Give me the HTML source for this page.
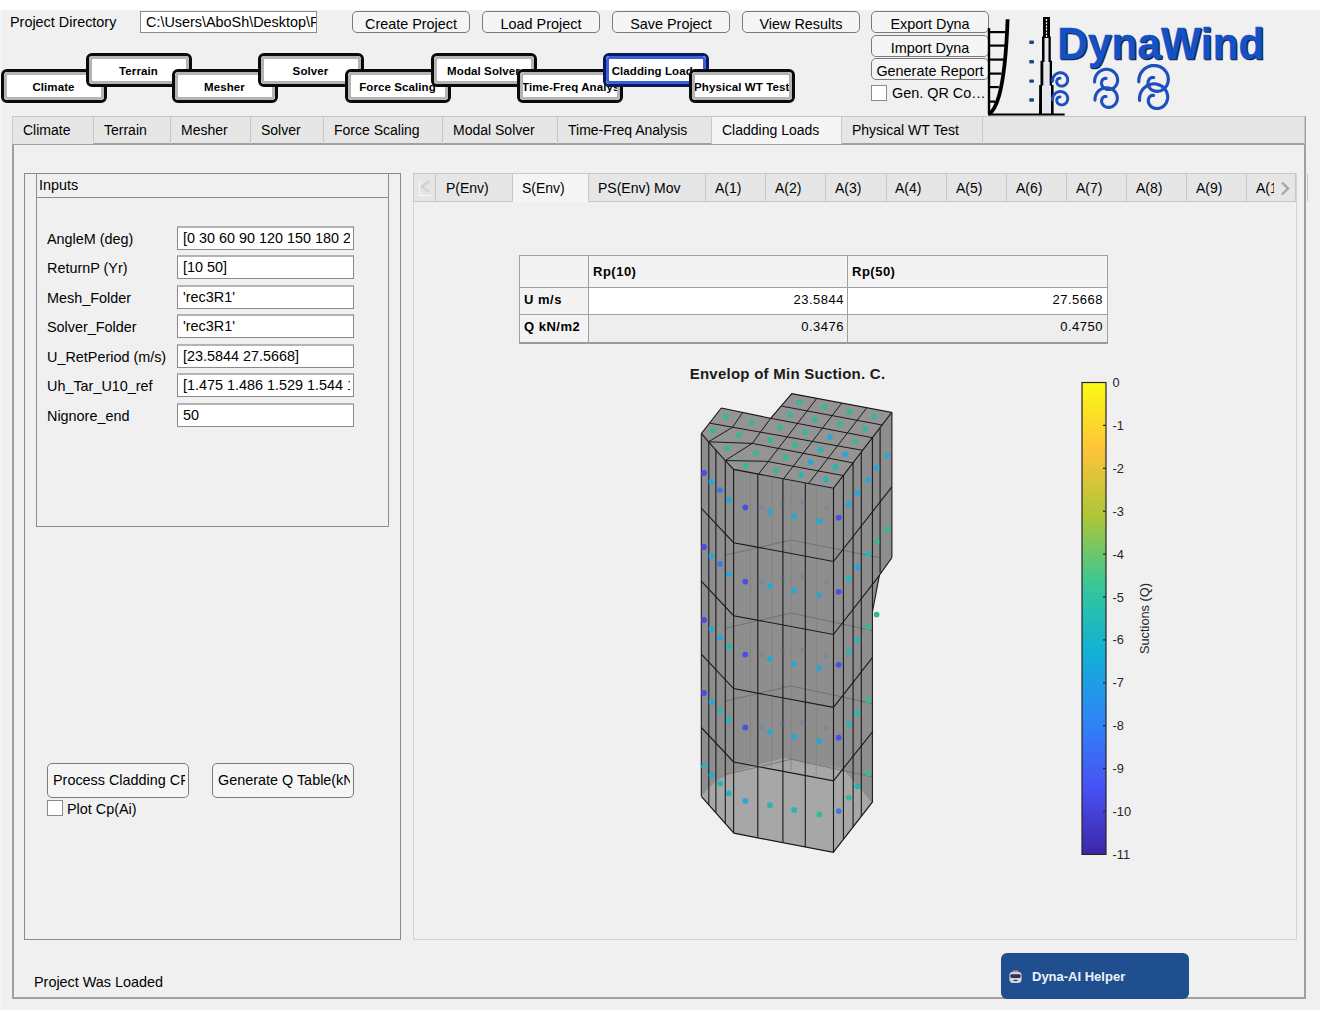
<!DOCTYPE html>
<html><head><meta charset="utf-8">
<style>
*{box-sizing:border-box;margin:0;padding:0}
html,body{width:1320px;height:1020px;background:#fff;overflow:hidden;font-family:"Liberation Sans",sans-serif;color:#000}
.a{position:absolute}
#app{position:absolute;left:0;top:10px;width:1320px;height:1000px;background:#f0f0f0;border-left:1px solid #f6f6f6}
.lbl{position:absolute;font-size:14.4px;line-height:16px;white-space:nowrap}
.btn{position:absolute;border:1px solid #7a7a7a;border-radius:5px;background:#f5f5f5;font-size:14.4px;text-align:center;white-space:nowrap;overflow:hidden;line-height:24px}
.edit{position:absolute;border:1px solid #8a8a8a;background:#fff;font-size:14.4px;white-space:nowrap;overflow:hidden;padding-left:5px;line-height:20px}
.chk{position:absolute;border:1px solid #8a8a8a;background:#fff;width:16px;height:16px}
/* custom overlapping tabs */
.ct{position:absolute;width:106px;height:34px;border:3px solid #0a0a0a;border-radius:6px;background:#fff;font-weight:bold;font-size:11.5px;text-align:center;overflow:hidden;white-space:nowrap}
.ct i{position:absolute;left:0;top:0;right:0;bottom:0;border:3px solid #b4b4b4;border-top-width:3.5px;border-radius:4px;font-style:normal;line-height:25px;letter-spacing:0.1px;overflow:hidden;text-indent:-1px}
.ct.sel{border-color:#0b1a5a}
.ct.sel i{border-color:#3a5fd9}
/* matlab tab row */
.tr{position:absolute;height:28px;border:1px solid #c2c2c2;border-bottom:none;background:#e6e6e6;font-size:14px;line-height:26px;white-space:nowrap;overflow:hidden}
</style></head><body>
<div id="app"></div>

<!-- top bar -->
<div class="lbl" style="left:10px;top:14px">Project Directory</div>
<div class="edit" style="left:140px;top:11px;width:177px;height:22px;line-height:21px">C:\Users\AboSh\Desktop\Proj</div>
<div class="btn" style="left:352px;top:11px;width:118px;height:22px">Create Project</div>
<div class="btn" style="left:482px;top:11px;width:118px;height:22px">Load Project</div>
<div class="btn" style="left:612px;top:11px;width:118px;height:22px">Save Project</div>
<div class="btn" style="left:742px;top:11px;width:118px;height:22px">View Results</div>
<div class="btn" style="left:871px;top:11px;width:118px;height:22px">Export Dyna</div>
<div class="btn" style="left:871px;top:35px;width:118px;height:22px">Import Dyna</div>
<div class="btn" style="left:871px;top:58px;width:118px;height:22px">Generate Report</div>
<div class="chk" style="left:871px;top:85px"></div>
<div class="lbl" style="left:892px;top:85px">Gen. QR Co…</div>

<!-- overlapping custom tabs -->
<div class="ct" style="left:1px;top:69px;z-index:1"><i>Climate</i></div>
<div class="ct" style="left:86px;top:53px;z-index:2"><i>Terrain</i></div>
<div class="ct" style="left:172px;top:69px;z-index:3"><i>Mesher</i></div>
<div class="ct" style="left:258px;top:53px;z-index:4"><i>Solver</i></div>
<div class="ct" style="left:345px;top:69px;z-index:5"><i>Force Scaling</i></div>
<div class="ct" style="left:431px;top:53px;z-index:6"><i>Modal Solver</i></div>
<div class="ct" style="left:517px;top:69px;z-index:7"><i>Time-Freq Analysis</i></div>
<div class="ct sel" style="left:603px;top:53px;z-index:8"><i>Cladding Loads</i></div>
<div class="ct" style="left:689px;top:69px;z-index:9"><i>Physical WT Test</i></div>

<!-- main tab group -->
<div class="a" style="left:12px;top:116px;width:1294px;height:883px;border:2px solid #a0a0a0;border-top:none;background:#f0f0f0"></div>
<div class="a" style="left:12px;top:116px;width:1293px;height:29px;background:#e6e6e6;border:1px solid #c8c8c8;border-bottom:2px solid #a0a0a0"></div>


<!-- main tab row labels -->
<div class="a" style="left:13px;top:117px;width:81px;height:27px;border-right:1px solid #c8c8c8;background:#e6e6e6"></div>
<div class="lbl" style="left:23px;top:122px;font-size:14px">Climate</div>
<div class="a" style="left:94px;top:117px;width:77px;height:27px;border-right:1px solid #c8c8c8"></div>
<div class="lbl" style="left:104px;top:122px;font-size:14px">Terrain</div>
<div class="a" style="left:171px;top:117px;width:80px;height:27px;border-right:1px solid #c8c8c8"></div>
<div class="lbl" style="left:181px;top:122px;font-size:14px">Mesher</div>
<div class="a" style="left:251px;top:117px;width:73px;height:27px;border-right:1px solid #c8c8c8"></div>
<div class="lbl" style="left:261px;top:122px;font-size:14px">Solver</div>
<div class="a" style="left:324px;top:117px;width:119px;height:27px;border-right:1px solid #c8c8c8"></div>
<div class="lbl" style="left:334px;top:122px;font-size:14px">Force Scaling</div>
<div class="a" style="left:443px;top:117px;width:115px;height:27px;border-right:1px solid #c8c8c8"></div>
<div class="lbl" style="left:453px;top:122px;font-size:14px">Modal Solver</div>
<div class="a" style="left:558px;top:117px;width:154px;height:27px;border-right:1px solid #c8c8c8"></div>
<div class="lbl" style="left:568px;top:122px;font-size:14px">Time-Freq Analysis</div>
<div class="a" style="left:711px;top:116px;width:131px;height:28px;background:#f5f5f5;border:1px solid #c8c8c8;border-bottom:none"></div>
<div class="lbl" style="left:722px;top:122px;font-size:14px">Cladding Loads</div>
<div class="a" style="left:842px;top:117px;width:141px;height:27px;border-right:1px solid #c8c8c8"></div>
<div class="lbl" style="left:852px;top:122px;font-size:14px">Physical WT Test</div>

<!-- left panel -->
<div class="a" style="left:24px;top:173px;width:377px;height:767px;border:1px solid #8c8c8c"></div>
<div class="a" style="left:36px;top:173px;width:353px;height:354px;border:1px solid #8c8c8c"></div>
<div class="a" style="left:36px;top:197px;width:353px;height:1px;background:#8c8c8c"></div>
<div class="lbl" style="left:39px;top:177px">Inputs</div>

<div class="lbl" style="left:47px;top:231px">AngleM (deg)</div>
<div class="edit" style="left:177px;top:226px;width:177px;height:24px;border-top:2px solid #b4b4b4;line-height:21px"><div style="overflow:hidden;width:167px">[0 30 60 90 120 150 180 210 240]</div></div>
<div class="lbl" style="left:47px;top:260px">ReturnP (Yr)</div>
<div class="edit" style="left:177px;top:255px;width:177px;height:24px;border-top:2px solid #b4b4b4;line-height:21px"><div style="overflow:hidden;width:167px">[10 50]</div></div>
<div class="lbl" style="left:47px;top:290px">Mesh_Folder</div>
<div class="edit" style="left:177px;top:285px;width:177px;height:24px;border-top:2px solid #b4b4b4;line-height:21px"><div style="overflow:hidden;width:167px">'rec3R1'</div></div>
<div class="lbl" style="left:47px;top:319px">Solver_Folder</div>
<div class="edit" style="left:177px;top:314px;width:177px;height:24px;border-top:2px solid #b4b4b4;line-height:21px"><div style="overflow:hidden;width:167px">'rec3R1'</div></div>
<div class="lbl" style="left:47px;top:349px">U_RetPeriod (m/s)</div>
<div class="edit" style="left:177px;top:344px;width:177px;height:24px;border-top:2px solid #b4b4b4;line-height:21px"><div style="overflow:hidden;width:167px">[23.5844 27.5668]</div></div>
<div class="lbl" style="left:47px;top:378px">Uh_Tar_U10_ref</div>
<div class="edit" style="left:177px;top:373px;width:177px;height:24px;border-top:2px solid #b4b4b4;line-height:21px"><div style="overflow:hidden;width:167px">[1.475 1.486 1.529 1.544 1.6]</div></div>
<div class="lbl" style="left:47px;top:408px">Nignore_end</div>
<div class="edit" style="left:177px;top:403px;width:177px;height:24px;border-top:2px solid #b4b4b4;line-height:21px"><div style="overflow:hidden;width:167px">50</div></div>

<div class="btn" style="left:47px;top:763px;width:142px;height:35px;line-height:32px;text-align:left;padding-left:5px"><div style="overflow:hidden;width:132px">Process Cladding CF</div></div>
<div class="btn" style="left:212px;top:763px;width:142px;height:35px;line-height:32px;text-align:left;padding-left:5px"><div style="overflow:hidden;width:132px">Generate Q Table(kN/m2)</div></div>
<div class="chk" style="left:47px;top:800px"></div>
<div class="lbl" style="left:67px;top:801px">Plot Cp(Ai)</div>

<div class="lbl" style="left:34px;top:974px">Project Was Loaded</div>

<!-- sub tab panel -->
<div class="a" style="left:413px;top:173px;width:884px;height:767px;border:1px solid #d4d4d4;background:#f0f0f0"></div>
<div class="a" style="left:413px;top:173px;width:883px;height:29px;background:#e6e6e6;border:1px solid #c8c8c8;border-bottom:1px solid #c8c8c8"></div>

<!-- sub tabs -->
<div class="a" style="left:414px;top:174px;width:22px;height:27px;border-right:1px solid #c8c8c8"></div><svg class="a" style="left:416px;top:178px" width="18" height="20"><path d="M3.5 2.5 L3.5 17.5 L16 17.5" fill="none" stroke="#f8f8f8" stroke-width="1"/><path d="M13.7 2.9 L5.8 9 L13.1 13.8" fill="none" stroke="#d2d2d2" stroke-width="2.4"/></svg>
<div class="a" style="left:436px;top:174px;width:77px;height:27px;border-right:1px solid #c8c8c8"></div>
<div class="lbl" style="left:446px;top:180px;font-size:14px">P(Env)</div>
<div class="a" style="left:512px;top:173px;width:77px;height:29px;background:#f5f5f5;border:1px solid #c8c8c8;border-bottom:none"></div>
<div class="lbl" style="left:522px;top:180px;font-size:14px">S(Env)</div>
<div class="a" style="left:588px;top:174px;width:118px;height:27px;border-right:1px solid #c8c8c8"></div>
<div class="lbl" style="left:598px;top:180px;font-size:14px">PS(Env) Mov</div>
<div class="a" style="left:705px;top:174px;width:61px;height:27px;border-right:1px solid #c8c8c8"></div>
<div class="lbl" style="left:715px;top:180px;font-size:14px">A(1)</div>
<div class="a" style="left:765px;top:174px;width:61px;height:27px;border-right:1px solid #c8c8c8"></div>
<div class="lbl" style="left:775px;top:180px;font-size:14px">A(2)</div>
<div class="a" style="left:825px;top:174px;width:62px;height:27px;border-right:1px solid #c8c8c8"></div>
<div class="lbl" style="left:835px;top:180px;font-size:14px">A(3)</div>
<div class="a" style="left:885px;top:174px;width:62px;height:27px;border-right:1px solid #c8c8c8"></div>
<div class="lbl" style="left:895px;top:180px;font-size:14px">A(4)</div>
<div class="a" style="left:946px;top:174px;width:61px;height:27px;border-right:1px solid #c8c8c8"></div>
<div class="lbl" style="left:956px;top:180px;font-size:14px">A(5)</div>
<div class="a" style="left:1006px;top:174px;width:61px;height:27px;border-right:1px solid #c8c8c8"></div>
<div class="lbl" style="left:1016px;top:180px;font-size:14px">A(6)</div>
<div class="a" style="left:1066px;top:174px;width:61px;height:27px;border-right:1px solid #c8c8c8"></div>
<div class="lbl" style="left:1076px;top:180px;font-size:14px">A(7)</div>
<div class="a" style="left:1126px;top:174px;width:61px;height:27px;border-right:1px solid #c8c8c8"></div>
<div class="lbl" style="left:1136px;top:180px;font-size:14px">A(8)</div>
<div class="a" style="left:1186px;top:174px;width:61px;height:27px;border-right:1px solid #c8c8c8"></div>
<div class="lbl" style="left:1196px;top:180px;font-size:14px">A(9)</div>
<div class="a" style="left:1246px;top:174px;width:62px;height:27px;border-right:1px solid #c8c8c8"></div>
<div class="lbl" style="left:1256px;top:180px;font-size:14px">A(10)</div>
<div class="a" style="left:1274px;top:174px;width:21px;height:27px;background:#e6e6e6"></div><svg class="a" style="left:1277px;top:178px" width="18" height="20"><path d="M5 4.5 L11 10.5 L5 16.5" fill="none" stroke="#a8a8a8" stroke-width="2.4"/></svg>

<!-- table -->
<div class="a" style="left:519px;top:255px;width:589px;height:89px;border:1px solid #a0a0a0;border-bottom:2px solid #9a9a9a;background:#f3f3f3"></div>
<div class="a" style="left:589px;top:287px;width:518px;height:27px;background:#fff"></div>
<div class="a" style="left:589px;top:314px;width:518px;height:28px;background:#eeeeee"></div>
<div class="a" style="left:520px;top:287px;width:587px;height:1px;background:#a0a0a0"></div>
<div class="a" style="left:520px;top:314px;width:587px;height:1px;background:#a0a0a0"></div>
<div class="a" style="left:588px;top:256px;width:1px;height:86px;background:#a0a0a0"></div>
<div class="a" style="left:847px;top:256px;width:1px;height:86px;background:#a0a0a0"></div>
<div class="a" style="left:593px;top:264px;font-size:13px;font-weight:bold;line-height:15px;letter-spacing:0.5px">Rp(10)</div>
<div class="a" style="left:852px;top:264px;font-size:13px;font-weight:bold;line-height:15px;letter-spacing:0.5px">Rp(50)</div>
<div class="a" style="left:524px;top:292px;font-size:13px;font-weight:bold;line-height:15px;letter-spacing:0.5px">U m/s</div>
<div class="a" style="left:524px;top:319px;font-size:13px;font-weight:bold;line-height:15px;letter-spacing:0.5px">Q kN/m2</div>
<div class="a" style="left:600px;top:292px;width:244px;text-align:right;font-size:13px;line-height:15px;letter-spacing:0.5px">23.5844</div>
<div class="a" style="left:860px;top:292px;width:243px;text-align:right;font-size:13px;line-height:15px;letter-spacing:0.5px">27.5668</div>
<div class="a" style="left:600px;top:319px;width:244px;text-align:right;font-size:13px;line-height:15px;letter-spacing:0.5px">0.3476</div>
<div class="a" style="left:860px;top:319px;width:243px;text-align:right;font-size:13px;line-height:15px;letter-spacing:0.5px">0.4750</div>

<!-- PLOT -->
<svg class="a" style="left:0;top:0" width="1320" height="1020" viewBox="0 0 1320 1020">
<defs><linearGradient id="par" x1="0" y1="0" x2="0" y2="1"><stop offset="0.0%" stop-color="rgb(249,250,20)"/><stop offset="14.3%" stop-color="rgb(254,195,56)"/><stop offset="28.6%" stop-color="rgb(171,198,56)"/><stop offset="42.9%" stop-color="rgb(55,199,151)"/><stop offset="57.1%" stop-color="rgb(17,177,214)"/><stop offset="71.4%" stop-color="rgb(45,134,246)"/><stop offset="85.7%" stop-color="rgb(71,82,244)"/><stop offset="100.0%" stop-color="rgb(61,38,168)"/></linearGradient></defs>
<text x="787.5" y="378.5" font-size="15" font-weight="bold" text-anchor="middle" fill="#1a1a1a" letter-spacing="0.25" font-family="Liberation Sans">Envelop of Min Suction. C.</text>
<polygon points="721.3,408.0 770.6,418.3 791.8,393.6 891.8,412.4 891.9,557.6 879.4,575.3 872.4,611.8 872.9,801.4 833.3,852.4 733.9,833.2 701.3,796.3 701.4,433.4" fill="#8e8e8e"/>
<polygon points="701.3,795.7 715.1,781.6 733.9,771.4 784.1,758.0 843.0,769.0 872.4,803.0 833.3,852.4 733.9,833.2" fill="#a7a7a7"/>
<polygon points="721.3,408.0 770.6,418.3 791.8,393.6 891.8,412.4 833.6,488.2 733.6,469.4 725.2,460.5 708.5,441.8 701.4,433.4" fill="#949494"/>
<polyline points="725.3,555.2 791.2,540.0 879.4,557.6" fill="none" stroke="#6a6a6a" stroke-width="0.8"/>
<polyline points="725.3,628.2 791.2,613.0 872.4,630.6" fill="none" stroke="#6a6a6a" stroke-width="0.8"/>
<polyline points="725.3,701.1 791.2,685.9 872.4,703.5" fill="none" stroke="#6a6a6a" stroke-width="0.8"/>
<polyline points="725.3,774.5 791.2,759.3 872.4,776.9" fill="none" stroke="#6a6a6a" stroke-width="0.8"/>
<line x1="750.4" y1="473.2" x2="750.4" y2="763.0" stroke="#808080" stroke-width="0.7"/>
<line x1="771.6" y1="477.1" x2="771.6" y2="766.8" stroke="#808080" stroke-width="0.7"/>
<line x1="791.2" y1="480.8" x2="791.2" y2="770.4" stroke="#808080" stroke-width="0.7"/>
<line x1="816.3" y1="485.5" x2="816.3" y2="774.9" stroke="#808080" stroke-width="0.7"/>
<line x1="701.3" y1="434.1" x2="701.3" y2="796.3" stroke="#1a1a1a" stroke-width="1.1"/>
<line x1="708.8" y1="441.8" x2="708.8" y2="804.8" stroke="#1a1a1a" stroke-width="1.1"/>
<line x1="715.9" y1="449.6" x2="715.9" y2="812.8" stroke="#1a1a1a" stroke-width="1.1"/>
<line x1="725.3" y1="459.9" x2="725.3" y2="823.5" stroke="#1a1a1a" stroke-width="1.1"/>
<line x1="733.6" y1="469.4" x2="733.6" y2="832.9" stroke="#1a1a1a" stroke-width="1.1"/>
<line x1="757.8" y1="473.9" x2="757.8" y2="837.8" stroke="#1a1a1a" stroke-width="1.1"/>
<line x1="782.9" y1="478.7" x2="782.9" y2="842.7" stroke="#1a1a1a" stroke-width="1.1"/>
<line x1="805.3" y1="482.9" x2="805.3" y2="847.0" stroke="#1a1a1a" stroke-width="1.1"/>
<line x1="833.5" y1="488.2" x2="833.5" y2="852.1" stroke="#1a1a1a" stroke-width="1.1"/>
<line x1="843.4" y1="475.5" x2="843.4" y2="839.4" stroke="#1a1a1a" stroke-width="1.1"/>
<line x1="853.1" y1="463.0" x2="853.1" y2="826.9" stroke="#1a1a1a" stroke-width="1.1"/>
<line x1="861.3" y1="452.4" x2="861.3" y2="816.3" stroke="#1a1a1a" stroke-width="1.1"/>
<line x1="872.4" y1="438.1" x2="872.4" y2="802.0" stroke="#1a1a1a" stroke-width="1.1"/>
<line x1="880.1" y1="428.1" x2="880.1" y2="573" stroke="#1a1a1a" stroke-width="1.1"/>
<line x1="891.9" y1="412.9" x2="891.9" y2="557.6" stroke="#1a1a1a" stroke-width="1.1"/>
<polyline points="701.3,508.2 733.6,542.7 833.5,561.5 891.9,486.9" fill="none" stroke="#1a1a1a" stroke-width="1.1"/>
<polyline points="701.3,581.2 733.6,615.7 833.5,634.5 879.4,575.3" fill="none" stroke="#1a1a1a" stroke-width="1.1"/>
<polyline points="701.3,654.1 733.6,688.6 833.5,707.4 872.4,657.6" fill="none" stroke="#1a1a1a" stroke-width="1.1"/>
<polyline points="701.3,727.5 733.6,762.0 833.5,780.8 872.9,731.3" fill="none" stroke="#1a1a1a" stroke-width="1.1"/>
<polyline points="701.3,796.3 733.9,833.2 833.3,852.4 872.9,801.4" fill="none" stroke="#1a1a1a" stroke-width="1.2"/>
<polyline points="891.9,557.6 879.4,575.3 872.4,611.8" fill="none" stroke="#1a1a1a" stroke-width="1.1"/>
<polyline points="721.3,408.0 770.6,418.3 791.8,393.6 891.8,412.4 833.6,488.2 733.6,469.4 725.2,460.5 708.5,441.8 701.4,433.4 721.3,408.0" fill="none" stroke="#1a1a1a" stroke-width="1.1"/>
<polyline points="725.2,460.5 766.6,461.3 843.3,475.6" fill="none" stroke="#1a1a1a" stroke-width="1.0"/>
<polyline points="708.5,441.8 752.3,443.4 853.0,462.9" fill="none" stroke="#1a1a1a" stroke-width="1.0"/>
<polyline points="709.5,423.1 862.7,450.3" fill="none" stroke="#1a1a1a" stroke-width="1.0"/>
<polyline points="770.6,418.3 872.4,437.7" fill="none" stroke="#1a1a1a" stroke-width="1.0"/>
<polyline points="782.1,406.2 882.1,425.0" fill="none" stroke="#1a1a1a" stroke-width="1.0"/>
<polyline points="758.6,474.1 816.8,398.3" fill="none" stroke="#1a1a1a" stroke-width="1.0"/>
<polyline points="783.6,478.8 841.8,403.0" fill="none" stroke="#1a1a1a" stroke-width="1.0"/>
<polyline points="808.6,483.5 866.8,407.7" fill="none" stroke="#1a1a1a" stroke-width="1.0"/>
<polyline points="725.2,460.5 752.3,443.4 770.6,418.3" fill="none" stroke="#1a1a1a" stroke-width="1.0"/>
<polyline points="708.5,441.8 732.4,427.4 742.3,413.1" fill="none" stroke="#1a1a1a" stroke-width="1.0"/>
<circle cx="745.9" cy="465.6" r="2.9" fill="#36b79b"/>
<circle cx="756.4" cy="452.9" r="2.9" fill="#36b79b"/>
<circle cx="770.4" cy="440.2" r="2.9" fill="#36b79b"/>
<circle cx="780.1" cy="427.5" r="2.9" fill="#36b79b"/>
<circle cx="789.8" cy="414.9" r="2.9" fill="#36b79b"/>
<circle cx="799.5" cy="402.3" r="2.9" fill="#36b79b"/>
<circle cx="776.0" cy="470.1" r="2.9" fill="#36b79b"/>
<circle cx="785.6" cy="457.5" r="2.9" fill="#36b79b"/>
<circle cx="795.4" cy="444.9" r="2.9" fill="#36b79b"/>
<circle cx="805.1" cy="432.2" r="2.9" fill="#36b79b"/>
<circle cx="814.8" cy="419.6" r="2.9" fill="#36b79b"/>
<circle cx="824.5" cy="407.0" r="2.9" fill="#36b79b"/>
<circle cx="801.0" cy="474.8" r="2.9" fill="#27b4b4"/>
<circle cx="810.6" cy="462.2" r="2.9" fill="#2aa6d6"/>
<circle cx="820.4" cy="449.6" r="2.9" fill="#27b4b4"/>
<circle cx="830.1" cy="436.9" r="2.9" fill="#2aa6d6"/>
<circle cx="839.8" cy="424.3" r="2.9" fill="#36b79b"/>
<circle cx="849.5" cy="411.7" r="2.9" fill="#36b79b"/>
<circle cx="826.0" cy="479.5" r="2.9" fill="#27b4b4"/>
<circle cx="835.6" cy="466.9" r="2.9" fill="#27b4b4"/>
<circle cx="845.4" cy="454.3" r="2.9" fill="#2aa6d6"/>
<circle cx="855.1" cy="441.6" r="2.9" fill="#36b79b"/>
<circle cx="864.8" cy="429.0" r="2.9" fill="#36b79b"/>
<circle cx="874.5" cy="416.4" r="2.9" fill="#36b79b"/>
<circle cx="725.9" cy="416.5" r="2.9" fill="#36b79b"/>
<circle cx="751.7" cy="422.3" r="2.9" fill="#36b79b"/>
<circle cx="712.9" cy="430.6" r="2.9" fill="#36b79b"/>
<circle cx="738.8" cy="435.3" r="2.9" fill="#36b79b"/>
<circle cx="727.0" cy="448.2" r="2.9" fill="#36b79b"/>
<circle cx="704.1" cy="472.9" r="2.9" fill="#4a4ee6"/>
<circle cx="711.6" cy="481.7" r="2.9" fill="#2aa6d6"/>
<circle cx="720.1" cy="490.1" r="2.9" fill="#3a7ae6"/>
<circle cx="728.8" cy="500.0" r="2.9" fill="#2aa6d6"/>
<circle cx="745.3" cy="507.5" r="2.9" fill="#4a4ee6"/>
<circle cx="770.0" cy="511.8" r="2.9" fill="#2aa6d6"/>
<circle cx="794.2" cy="516.5" r="2.9" fill="#2aa6d6"/>
<circle cx="819.4" cy="521.2" r="2.9" fill="#2aa6d6"/>
<circle cx="838.7" cy="517.7" r="2.9" fill="#4a4ee6"/>
<circle cx="848.8" cy="504.3" r="2.9" fill="#2aa6d6"/>
<circle cx="857.5" cy="492.9" r="2.9" fill="#2aa6d6"/>
<circle cx="868.1" cy="480.0" r="2.9" fill="#2aa6d6"/>
<circle cx="876.6" cy="467.5" r="2.9" fill="#2aa6d6"/>
<circle cx="887.2" cy="455.3" r="2.9" fill="#2aa6d6"/>
<circle cx="762.0" cy="507.5" r="2.9" fill="#5a6ab8" opacity="0.20"/>
<circle cx="782.5" cy="503.5" r="2.9" fill="#5a6ab8" opacity="0.20"/>
<circle cx="803.0" cy="502.7" r="2.9" fill="#5a6ab8" opacity="0.20"/>
<circle cx="826.5" cy="508.2" r="2.9" fill="#5a6ab8" opacity="0.20"/>
<circle cx="704.1" cy="547.0" r="2.9" fill="#4a4ee6"/>
<circle cx="711.6" cy="555.8" r="2.9" fill="#2aa6d6"/>
<circle cx="720.1" cy="564.2" r="2.9" fill="#3a7ae6"/>
<circle cx="728.8" cy="574.1" r="2.9" fill="#2aa6d6"/>
<circle cx="745.3" cy="581.6" r="2.9" fill="#4a4ee6"/>
<circle cx="770.0" cy="585.9" r="2.9" fill="#2aa6d6"/>
<circle cx="794.2" cy="590.6" r="2.9" fill="#2aa6d6"/>
<circle cx="819.4" cy="595.3" r="2.9" fill="#2aa6d6"/>
<circle cx="838.7" cy="591.8" r="2.9" fill="#4a4ee6"/>
<circle cx="848.8" cy="578.4" r="2.9" fill="#27b4b4"/>
<circle cx="857.5" cy="567.0" r="2.9" fill="#2aa6d6"/>
<circle cx="868.1" cy="554.1" r="2.9" fill="#27b4b4"/>
<circle cx="876.6" cy="541.6" r="2.9" fill="#36b79b"/>
<circle cx="887.2" cy="529.4" r="2.9" fill="#36b79b"/>
<circle cx="762.0" cy="581.6" r="2.9" fill="#5a6ab8" opacity="0.20"/>
<circle cx="782.5" cy="577.6" r="2.9" fill="#5a6ab8" opacity="0.20"/>
<circle cx="803.0" cy="576.8" r="2.9" fill="#5a6ab8" opacity="0.20"/>
<circle cx="826.5" cy="582.3" r="2.9" fill="#5a6ab8" opacity="0.20"/>
<circle cx="704.1" cy="620.0" r="2.9" fill="#4a4ee6"/>
<circle cx="711.6" cy="628.8" r="2.9" fill="#2aa6d6"/>
<circle cx="720.1" cy="637.2" r="2.9" fill="#2aa6d6"/>
<circle cx="728.8" cy="647.1" r="2.9" fill="#27b4b4"/>
<circle cx="745.3" cy="654.6" r="2.9" fill="#4a4ee6"/>
<circle cx="770.0" cy="658.9" r="2.9" fill="#2aa6d6"/>
<circle cx="794.2" cy="663.6" r="2.9" fill="#2aa6d6"/>
<circle cx="819.4" cy="668.3" r="2.9" fill="#2aa6d6"/>
<circle cx="838.7" cy="664.8" r="2.9" fill="#4a4ee6"/>
<circle cx="848.8" cy="651.4" r="2.9" fill="#27b4b4"/>
<circle cx="857.5" cy="640.0" r="2.9" fill="#27b4b4"/>
<circle cx="868.1" cy="627.1" r="2.9" fill="#36b79b"/>
<circle cx="876.6" cy="614.6" r="2.9" fill="#36b79b"/>
<circle cx="762.0" cy="654.6" r="2.9" fill="#5a6ab8" opacity="0.20"/>
<circle cx="782.5" cy="650.6" r="2.9" fill="#5a6ab8" opacity="0.20"/>
<circle cx="803.0" cy="649.8" r="2.9" fill="#5a6ab8" opacity="0.20"/>
<circle cx="826.5" cy="655.3" r="2.9" fill="#5a6ab8" opacity="0.20"/>
<circle cx="704.1" cy="692.9" r="2.9" fill="#4a4ee6"/>
<circle cx="711.6" cy="701.7" r="2.9" fill="#2aa6d6"/>
<circle cx="720.1" cy="710.1" r="2.9" fill="#27b4b4"/>
<circle cx="728.8" cy="720.0" r="2.9" fill="#27b4b4"/>
<circle cx="745.3" cy="727.5" r="2.9" fill="#4a4ee6"/>
<circle cx="770.0" cy="731.8" r="2.9" fill="#2aa6d6"/>
<circle cx="794.2" cy="736.5" r="2.9" fill="#2aa6d6"/>
<circle cx="819.4" cy="741.2" r="2.9" fill="#2aa6d6"/>
<circle cx="838.7" cy="737.7" r="2.9" fill="#4a4ee6"/>
<circle cx="848.8" cy="724.3" r="2.9" fill="#27b4b4"/>
<circle cx="857.5" cy="712.9" r="2.9" fill="#27b4b4"/>
<circle cx="868.1" cy="700.0" r="2.9" fill="#36b79b"/>
<circle cx="762.0" cy="727.5" r="2.9" fill="#5a6ab8" opacity="0.20"/>
<circle cx="782.5" cy="723.5" r="2.9" fill="#5a6ab8" opacity="0.20"/>
<circle cx="803.0" cy="722.7" r="2.9" fill="#5a6ab8" opacity="0.20"/>
<circle cx="826.5" cy="728.2" r="2.9" fill="#5a6ab8" opacity="0.20"/>
<circle cx="704.1" cy="766.3" r="2.9" fill="#27b4b4"/>
<circle cx="711.6" cy="775.1" r="2.9" fill="#2aa6d6"/>
<circle cx="720.1" cy="783.5" r="2.9" fill="#27b4b4"/>
<circle cx="728.8" cy="793.4" r="2.9" fill="#27b4b4"/>
<circle cx="745.3" cy="800.9" r="2.9" fill="#2aa6d6"/>
<circle cx="770.0" cy="805.2" r="2.9" fill="#27b4b4"/>
<circle cx="794.2" cy="809.9" r="2.9" fill="#27b4b4"/>
<circle cx="819.4" cy="814.6" r="2.9" fill="#36b79b"/>
<circle cx="838.7" cy="811.1" r="2.9" fill="#3a7ae6"/>
<circle cx="848.8" cy="797.7" r="2.9" fill="#36b79b"/>
<circle cx="857.5" cy="786.3" r="2.9" fill="#27b4b4"/>
<circle cx="868.1" cy="773.4" r="2.9" fill="#36b79b"/>
<rect x="1082" y="382.5" width="24" height="471.9" fill="url(#par)" stroke="#262626" stroke-width="1.2"/>
<line x1="1103" y1="425.4" x2="1106" y2="425.4" stroke="#262626" stroke-width="1.2"/><line x1="1103" y1="468.3" x2="1106" y2="468.3" stroke="#262626" stroke-width="1.2"/><line x1="1103" y1="511.2" x2="1106" y2="511.2" stroke="#262626" stroke-width="1.2"/><line x1="1103" y1="554.1" x2="1106" y2="554.1" stroke="#262626" stroke-width="1.2"/><line x1="1103" y1="597.0" x2="1106" y2="597.0" stroke="#262626" stroke-width="1.2"/><line x1="1103" y1="639.9" x2="1106" y2="639.9" stroke="#262626" stroke-width="1.2"/><line x1="1103" y1="682.8" x2="1106" y2="682.8" stroke="#262626" stroke-width="1.2"/><line x1="1103" y1="725.7" x2="1106" y2="725.7" stroke="#262626" stroke-width="1.2"/><line x1="1103" y1="768.6" x2="1106" y2="768.6" stroke="#262626" stroke-width="1.2"/><line x1="1103" y1="811.5" x2="1106" y2="811.5" stroke="#262626" stroke-width="1.2"/>
<g font-family="Liberation Sans"><text x="1112.5" y="387.0" font-size="12.8" fill="#262626">0</text><text x="1112.5" y="429.9" font-size="12.8" fill="#262626">-1</text><text x="1112.5" y="472.8" font-size="12.8" fill="#262626">-2</text><text x="1112.5" y="515.7" font-size="12.8" fill="#262626">-3</text><text x="1112.5" y="558.6" font-size="12.8" fill="#262626">-4</text><text x="1112.5" y="601.5" font-size="12.8" fill="#262626">-5</text><text x="1112.5" y="644.4" font-size="12.8" fill="#262626">-6</text><text x="1112.5" y="687.3" font-size="12.8" fill="#262626">-7</text><text x="1112.5" y="730.2" font-size="12.8" fill="#262626">-8</text><text x="1112.5" y="773.1" font-size="12.8" fill="#262626">-9</text><text x="1112.5" y="816.0" font-size="12.8" fill="#262626">-10</text><text x="1112.5" y="858.9" font-size="12.8" fill="#262626">-11</text></g>
<text transform="translate(1148.5,618.5) rotate(-90)" font-size="12.8" text-anchor="middle" fill="#262626" font-family="Liberation Sans">Suctions (Q)</text>
</svg>
<!-- /PLOT -->
<!-- LOGO -->
<svg class="a" style="left:0;top:0" width="1320" height="120" viewBox="0 0 1320 120">
<path d="M1007.6 19.2 C1006.5 50 1004 78 999 96 C996 106 993 112 989 114" fill="none" stroke="#000" stroke-width="3.8"/>
<line x1="988.5" y1="32.1" x2="1006.3" y2="32.1" stroke="#000" stroke-width="2.2"/>
<line x1="988.5" y1="45.6" x2="1005.2" y2="45.6" stroke="#000" stroke-width="2.2"/>
<line x1="988.5" y1="59.6" x2="1003.6" y2="59.6" stroke="#000" stroke-width="2.2"/>
<line x1="988.5" y1="73.6" x2="1001.4" y2="73.6" stroke="#000" stroke-width="2.2"/>
<line x1="988.5" y1="87.1" x2="998.8" y2="87.1" stroke="#000" stroke-width="2.2"/>
<line x1="988.5" y1="101.6" x2="995.3" y2="101.6" stroke="#000" stroke-width="2.2"/>
<line x1="989" y1="28" x2="989" y2="114" stroke="#000" stroke-width="2.4"/>
<line x1="988" y1="114.5" x2="1064.7" y2="114.5" stroke="#000" stroke-width="2.2"/>
<rect x="1029.2" y="40.6" width="4.8" height="3.4" rx="1" fill="#24478a"/>
<rect x="1029.2" y="60.0" width="4.8" height="3.4" rx="1" fill="#24478a"/>
<rect x="1029.2" y="79.4" width="4.8" height="3.4" rx="1" fill="#24478a"/>
<rect x="1029.2" y="98.3" width="4.8" height="3.4" rx="1" fill="#24478a"/>
<path d="M1039 114.5 L1039.2 85 L1040.5 85 L1040.5 60.7 L1042 60.7 L1042 36.5 L1043 36.5 L1043 17 L1050 17 L1050 36.5 L1050.8 36.5 L1050.8 60.7 L1052 60.7 L1052 85 L1053.6 85 L1053.6 114.5 Z" fill="#000"/>
<path d="M1042 113.5 L1042 85.5 L1043.3 85.5 L1043.3 62 L1044.5 62 L1044.5 38 L1048.5 38 L1048.5 62 L1049.7 62 L1049.7 85.5 L1051 85.5 L1051 113.5 Z" fill="#e6e6ee"/>
<line x1="1046.5" y1="19" x2="1046.5" y2="37" stroke="#fff" stroke-width="1.2" stroke-dasharray="2 1.2"/>
<path d="M1052.6 81.3 L1052.6 80.6 L1052.6 79.9 L1052.7 79.2 L1052.9 78.5 L1053.1 77.8 L1053.4 77.2 L1053.7 76.6 L1054.1 76.0 L1054.5 75.5 L1054.9 75.0 L1055.5 74.5 L1056.0 74.1 L1056.6 73.7 L1057.2 73.4 L1057.8 73.2 L1058.5 73.0 L1059.1 72.8 L1059.8 72.7 L1060.4 72.7 L1061.1 72.8 L1061.8 72.8 L1062.4 73.0 L1063.0 73.2 L1063.6 73.5 L1064.2 73.8 L1064.7 74.1 L1065.2 74.5 L1065.7 74.9 L1066.1 75.4 L1066.5 75.9 L1066.8 76.4 L1067.1 77.0 L1067.3 77.6 L1067.5 78.1 L1067.6 78.7 L1067.7 79.3 L1067.7 79.9 L1067.7 80.5 L1067.6 81.1 L1067.4 81.6 L1067.3 82.2 L1067.0 82.7 L1066.8 83.2 L1066.5 83.7 L1066.1 84.1 L1065.7 84.5 L1065.3 84.9 L1064.9 85.2 L1064.4 85.4 L1064.0 85.7 L1063.5 85.9 L1063.0 86.0 L1062.5 86.1 L1062.0 86.1 L1061.5 86.1 L1061.0 86.1 L1060.5 86.0 L1060.1 85.9 L1059.6 85.7 L1059.2 85.5 L1058.8 85.3 L1058.5 85.1 L1058.1 84.8 L1057.8 84.5 L1057.6 84.1 L1057.3 83.8 L1057.1 83.4 L1057.0 83.0 L1056.8 82.7 L1056.8 82.3 L1056.7 81.9 L1056.7 81.5 L1056.7 81.2 L1056.8 80.8 L1056.9 80.5 L1057.0 80.1 L1057.1 79.8 L1057.3 79.5 L1057.5 79.3 L1057.7 79.0 L1057.9 78.8 L1058.1 78.6 L1058.4 78.5 L1058.6 78.4 L1058.9 78.3 L1059.1 78.2 L1059.4 78.2 L1059.7 78.1 L1059.9 78.2 L1060.1 78.2" fill="none" stroke="#1f4fbf" stroke-width="2.9" stroke-linecap="round" stroke-linejoin="round"/>
<path d="M1052.6 100.1 L1052.6 99.4 L1052.6 98.7 L1052.7 98.0 L1052.9 97.3 L1053.1 96.6 L1053.4 96.0 L1053.7 95.4 L1054.1 94.8 L1054.5 94.3 L1054.9 93.8 L1055.5 93.3 L1056.0 92.9 L1056.6 92.5 L1057.2 92.2 L1057.8 92.0 L1058.5 91.8 L1059.1 91.6 L1059.8 91.5 L1060.4 91.5 L1061.1 91.6 L1061.8 91.6 L1062.4 91.8 L1063.0 92.0 L1063.6 92.3 L1064.2 92.6 L1064.7 92.9 L1065.2 93.3 L1065.7 93.7 L1066.1 94.2 L1066.5 94.7 L1066.8 95.2 L1067.1 95.8 L1067.3 96.4 L1067.5 96.9 L1067.6 97.5 L1067.7 98.1 L1067.7 98.7 L1067.7 99.3 L1067.6 99.9 L1067.4 100.4 L1067.3 101.0 L1067.0 101.5 L1066.8 102.0 L1066.5 102.5 L1066.1 102.9 L1065.7 103.3 L1065.3 103.7 L1064.9 104.0 L1064.4 104.2 L1064.0 104.5 L1063.5 104.7 L1063.0 104.8 L1062.5 104.9 L1062.0 104.9 L1061.5 104.9 L1061.0 104.9 L1060.5 104.8 L1060.1 104.7 L1059.6 104.5 L1059.2 104.3 L1058.8 104.1 L1058.5 103.9 L1058.1 103.6 L1057.8 103.3 L1057.6 102.9 L1057.3 102.6 L1057.1 102.2 L1057.0 101.8 L1056.8 101.5 L1056.8 101.1 L1056.7 100.7 L1056.7 100.3 L1056.7 100.0 L1056.8 99.6 L1056.9 99.3 L1057.0 98.9 L1057.1 98.6 L1057.3 98.3 L1057.5 98.1 L1057.7 97.8 L1057.9 97.6 L1058.1 97.4 L1058.4 97.3 L1058.6 97.2 L1058.9 97.1 L1059.1 97.0 L1059.4 97.0 L1059.7 96.9 L1059.9 97.0 L1060.1 97.0" fill="none" stroke="#1f4fbf" stroke-width="2.9" stroke-linecap="round" stroke-linejoin="round"/>
<path d="M1094.6 82.0 L1094.6 80.9 L1094.7 79.9 L1094.9 78.8 L1095.1 77.8 L1095.5 76.8 L1095.9 75.9 L1096.4 75.0 L1097.0 74.1 L1097.6 73.3 L1098.4 72.5 L1099.1 71.9 L1100.0 71.3 L1100.9 70.7 L1101.8 70.3 L1102.7 69.9 L1103.7 69.6 L1104.7 69.4 L1105.7 69.3 L1106.7 69.3 L1107.7 69.4 L1108.7 69.5 L1109.6 69.7 L1110.6 70.0 L1111.5 70.4 L1112.3 70.9 L1113.1 71.4 L1113.9 72.0 L1114.6 72.7 L1115.2 73.4 L1115.8 74.1 L1116.3 74.9 L1116.7 75.7 L1117.0 76.6 L1117.3 77.4 L1117.5 78.3 L1117.6 79.2 L1117.6 80.1 L1117.6 81.0 L1117.5 81.8 L1117.3 82.7 L1117.0 83.5 L1116.7 84.3 L1116.3 85.0 L1115.8 85.7 L1115.3 86.4 L1114.8 87.0 L1114.2 87.5 L1113.6 88.0 L1112.9 88.4 L1112.2 88.8 L1111.5 89.0 L1110.8 89.3 L1110.1 89.4 L1109.3 89.5 L1108.6 89.5 L1107.9 89.5 L1107.2 89.4 L1106.5 89.2 L1105.9 89.0 L1105.3 88.7 L1104.7 88.4 L1104.1 88.1 L1103.7 87.7 L1103.2 87.2 L1102.8 86.7 L1102.5 86.3 L1102.2 85.7 L1101.9 85.2 L1101.7 84.7 L1101.6 84.1 L1101.5 83.6 L1101.5 83.1 L1101.5 82.5 L1101.5 82.0 L1101.7 81.5 L1101.8 81.1 L1102.0 80.7 L1102.2 80.2 L1102.5 79.9 L1102.8 79.5 L1103.1 79.3 L1103.4 79.0 L1103.7 78.8 L1104.1 78.6 L1104.4 78.5 L1104.8 78.4 L1105.1 78.3 L1105.5 78.3 L1105.8 78.4 L1106.1 78.4" fill="none" stroke="#1f4fbf" stroke-width="3.1" stroke-linecap="round" stroke-linejoin="round"/>
<path d="M1095.0 100.1 L1095.0 99.0 L1095.1 98.0 L1095.2 97.0 L1095.5 96.0 L1095.8 95.1 L1096.2 94.1 L1096.7 93.3 L1097.3 92.4 L1097.9 91.6 L1098.6 90.9 L1099.4 90.3 L1100.2 89.7 L1101.1 89.2 L1101.9 88.7 L1102.9 88.4 L1103.8 88.1 L1104.8 87.9 L1105.7 87.8 L1106.7 87.8 L1107.7 87.8 L1108.6 88.0 L1109.6 88.2 L1110.5 88.5 L1111.3 88.9 L1112.2 89.3 L1112.9 89.8 L1113.7 90.4 L1114.3 91.0 L1115.0 91.7 L1115.5 92.4 L1116.0 93.2 L1116.4 94.0 L1116.7 94.8 L1117.0 95.7 L1117.2 96.5 L1117.3 97.4 L1117.3 98.2 L1117.3 99.1 L1117.2 99.9 L1117.0 100.7 L1116.7 101.5 L1116.4 102.3 L1116.0 103.0 L1115.6 103.7 L1115.1 104.3 L1114.6 104.9 L1114.0 105.4 L1113.4 105.9 L1112.7 106.3 L1112.1 106.6 L1111.4 106.9 L1110.7 107.1 L1110.0 107.3 L1109.3 107.4 L1108.6 107.4 L1107.9 107.4 L1107.2 107.3 L1106.5 107.1 L1105.9 106.9 L1105.3 106.6 L1104.7 106.3 L1104.2 106.0 L1103.7 105.6 L1103.3 105.2 L1102.9 104.7 L1102.6 104.2 L1102.3 103.7 L1102.0 103.2 L1101.8 102.7 L1101.7 102.2 L1101.6 101.6 L1101.6 101.1 L1101.6 100.6 L1101.7 100.1 L1101.8 99.6 L1101.9 99.2 L1102.1 98.8 L1102.3 98.4 L1102.5 98.0 L1102.8 97.7 L1103.1 97.4 L1103.4 97.1 L1103.8 96.9 L1104.1 96.7 L1104.4 96.6 L1104.8 96.5 L1105.1 96.5 L1105.5 96.4 L1105.8 96.5 L1106.1 96.5" fill="none" stroke="#1f4fbf" stroke-width="3.1" stroke-linecap="round" stroke-linejoin="round"/>
<path d="M1138.8 81.8 L1138.8 80.5 L1138.9 79.1 L1139.1 77.8 L1139.5 76.5 L1139.9 75.2 L1140.5 74.0 L1141.1 72.8 L1141.9 71.7 L1142.7 70.6 L1143.6 69.7 L1144.6 68.8 L1145.7 68.0 L1146.9 67.4 L1148.0 66.8 L1149.3 66.3 L1150.5 65.9 L1151.8 65.7 L1153.1 65.6 L1154.4 65.5 L1155.6 65.6 L1156.9 65.8 L1158.1 66.1 L1159.3 66.5 L1160.5 67.0 L1161.6 67.6 L1162.6 68.3 L1163.6 69.0 L1164.4 69.9 L1165.2 70.8 L1166.0 71.7 L1166.6 72.7 L1167.1 73.8 L1167.6 74.9 L1167.9 76.0 L1168.1 77.1 L1168.3 78.3 L1168.3 79.4 L1168.2 80.5 L1168.1 81.6 L1167.8 82.7 L1167.5 83.7 L1167.1 84.7 L1166.6 85.7 L1166.0 86.5 L1165.4 87.4 L1164.6 88.1 L1163.9 88.8 L1163.1 89.4 L1162.2 89.9 L1161.4 90.4 L1160.5 90.7 L1159.5 91.0 L1158.6 91.2 L1157.7 91.3 L1156.8 91.3 L1155.9 91.2 L1155.0 91.1 L1154.2 90.9 L1153.3 90.6 L1152.6 90.3 L1151.8 89.9 L1151.2 89.4 L1150.6 88.9 L1150.0 88.3 L1149.5 87.7 L1149.1 87.1 L1148.7 86.5 L1148.4 85.8 L1148.2 85.1 L1148.0 84.4 L1148.0 83.8 L1147.9 83.1 L1148.0 82.5 L1148.1 81.8 L1148.2 81.2 L1148.4 80.7 L1148.7 80.1 L1148.9 79.6 L1149.3 79.2 L1149.6 78.8 L1150.0 78.5 L1150.4 78.2 L1150.9 77.9 L1151.3 77.7 L1151.7 77.6 L1152.2 77.5 L1152.6 77.5 L1153.0 77.5 L1153.4 77.5 L1153.7 77.6" fill="none" stroke="#1f4fbf" stroke-width="3.2" stroke-linecap="round" stroke-linejoin="round"/>
<path d="M1139.6 100.4 L1139.5 99.1 L1139.5 97.9 L1139.7 96.6 L1139.9 95.3 L1140.2 94.0 L1140.7 92.8 L1141.3 91.7 L1141.9 90.6 L1142.7 89.5 L1143.5 88.6 L1144.4 87.7 L1145.4 86.9 L1146.4 86.1 L1147.5 85.5 L1148.6 85.0 L1149.8 84.6 L1151.0 84.3 L1152.2 84.0 L1153.5 83.9 L1154.7 83.9 L1155.9 84.0 L1157.1 84.3 L1158.3 84.6 L1159.4 85.0 L1160.5 85.5 L1161.5 86.1 L1162.5 86.7 L1163.4 87.5 L1164.2 88.3 L1164.9 89.2 L1165.6 90.1 L1166.2 91.1 L1166.7 92.1 L1167.0 93.1 L1167.3 94.2 L1167.5 95.3 L1167.7 96.4 L1167.7 97.4 L1167.6 98.5 L1167.4 99.5 L1167.1 100.6 L1166.8 101.5 L1166.4 102.5 L1165.9 103.3 L1165.3 104.2 L1164.7 104.9 L1164.0 105.6 L1163.3 106.3 L1162.5 106.8 L1161.7 107.3 L1160.8 107.7 L1160.0 108.0 L1159.1 108.3 L1158.2 108.4 L1157.3 108.5 L1156.5 108.5 L1155.6 108.4 L1154.8 108.3 L1154.0 108.0 L1153.2 107.8 L1152.5 107.4 L1151.8 107.0 L1151.2 106.6 L1150.6 106.1 L1150.1 105.5 L1149.7 104.9 L1149.3 104.3 L1149.0 103.7 L1148.7 103.1 L1148.5 102.4 L1148.4 101.8 L1148.3 101.2 L1148.3 100.5 L1148.3 99.9 L1148.4 99.3 L1148.6 98.8 L1148.8 98.2 L1149.0 97.7 L1149.3 97.3 L1149.6 96.9 L1150.0 96.5 L1150.4 96.2 L1150.8 95.9 L1151.2 95.7 L1151.6 95.5 L1152.0 95.4 L1152.4 95.4 L1152.8 95.3 L1153.2 95.4 L1153.6 95.4" fill="none" stroke="#1f4fbf" stroke-width="3.2" stroke-linecap="round" stroke-linejoin="round"/>
<g transform="translate(0,59) scale(1,1.06) translate(0,-59)">
<text x="1058.4" y="60.2" font-family="Liberation Sans" font-weight="bold" font-size="42.5" fill="#1a2040" stroke="#1a2040" stroke-width="0.5">DynaWind</text>
<text x="1057.2" y="59" font-family="Liberation Sans" font-weight="bold" font-size="42.5" fill="#1450c6" stroke="#1450c6" stroke-width="0.5">DynaWind</text>
</g>
</svg>
<!-- /LOGO -->
<!-- AI -->
<div class="a" style="left:1001px;top:953px;width:188px;height:46px;background:#1f4f8e;border-radius:6px"></div>
<svg class="a" style="left:1008px;top:969.5px" width="15" height="14" viewBox="0 0 16 15"><rect x="1.5" y="2" width="13" height="12" rx="4" fill="#d8d4e0"/><rect x="2.5" y="4.5" width="11" height="4" rx="1.5" fill="#2a3550"/><rect x="6" y="10.5" width="4" height="1.3" fill="#2a3550"/><rect x="5" y="0.5" width="6" height="2" rx="1" fill="#c89090"/></svg>
<div class="a" style="left:1032px;top:969px;font-size:13px;font-weight:bold;color:#eef3fa;line-height:16px">Dyna-AI Helper</div>
<!-- /AI -->
</body></html>
